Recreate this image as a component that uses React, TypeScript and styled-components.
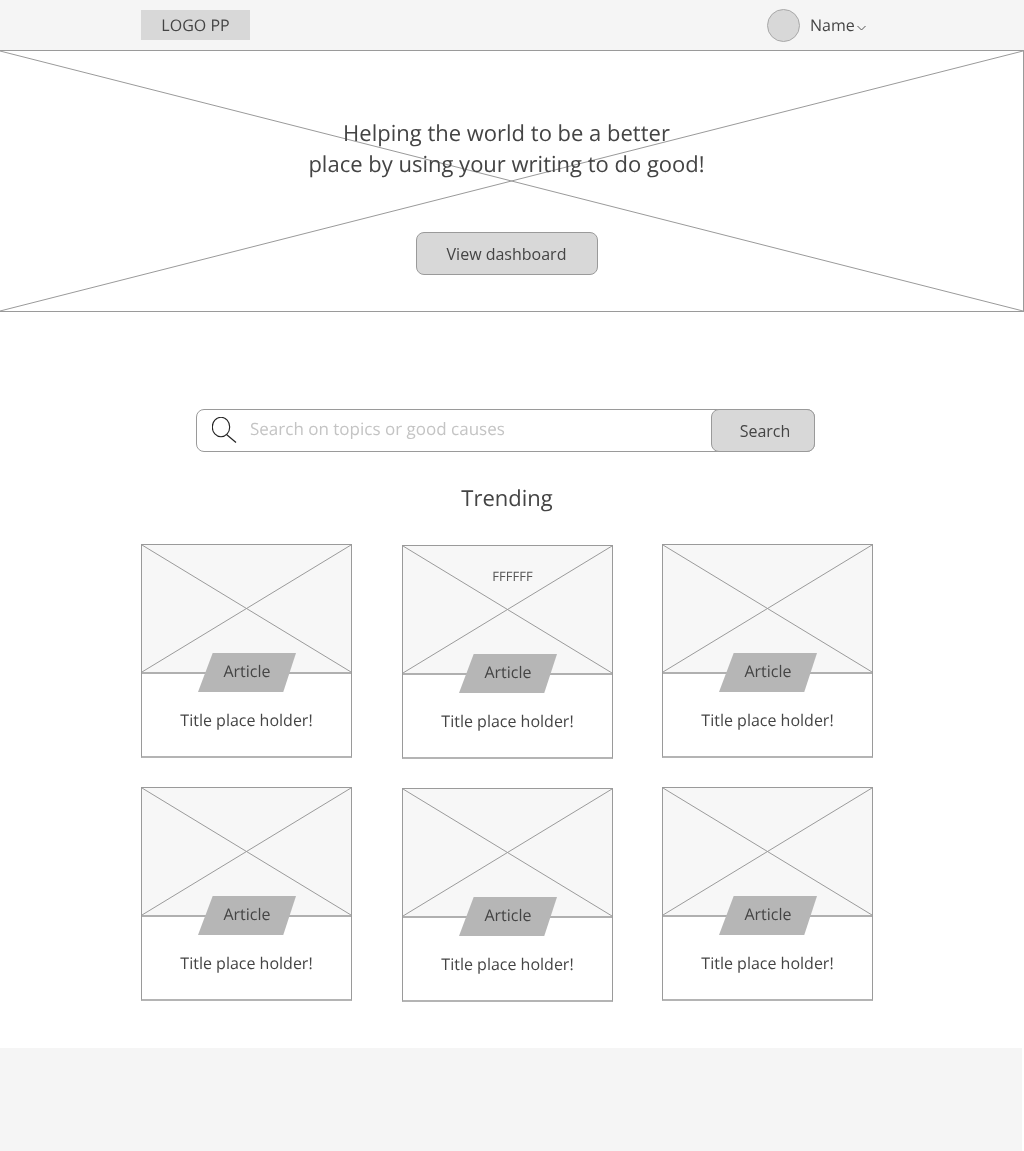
import { createGlobalStyle } from "styled-components";
import styled from "styled-components";

const GlobalStyle = createGlobalStyle`
  html, body {
    margin: 0;
    padding: 0;
    background: #fff;
  }
  body {
    font-family: "Open Sans", "Liberation Sans", sans-serif;
    color: #444;
    text-rendering: geometricPrecision;
  }
  * { box-sizing: border-box; }
`;

const Page = styled.div`
  width: 1024px;
  height: 1151px;
  overflow: hidden;
  will-change: transform;
`;

const HeaderBar = styled.header`
  display: flex;
  align-items: center;
  height: 50px;
  padding-left: 141px;
  background: #f5f5f5;
`;

const Logo = styled.div`
  display: flex;
  align-items: center;
  justify-content: center;
  width: 109px;
  height: 30px;
  background: #d8d8d8;
  font-size: 16px;
  color: #444;
`;

const UserMenu = styled.div`
  display: flex;
  align-items: center;
  margin-left: 517px;
`;

const Avatar = styled.div`
  width: 33px;
  height: 33px;
  border-radius: 50%;
  background: #d8d8d8;
  border: 1px solid #a8a8a8;
`;

const UserName = styled.span`
  margin-left: 10px;
  font-size: 16px;
  color: #444;
`;

const Chevron = styled.svg`
  margin: 6px 0 0 2px;
`;

const Hero = styled.section`
  position: relative;
  display: flex;
  flex-direction: column;
  align-items: center;
  height: 262px;
  padding: 67px 10px 0 0;
  background: #fff;
  border: 1px solid #9a9a9a;
  border-left: none;
`;

const CrossLines = styled.svg`
  position: absolute;
  top: 0;
  left: 0;
  width: 100%;
  height: 100%;
`;

const HeroTitle = styled.h1`
  position: relative;
  margin: 0;
  font-size: 22px;
  font-weight: 400;
  line-height: 31px;
  text-align: center;
  color: #444;
`;

const PrimaryButton = styled.button`
  position: relative;
  width: 182px;
  height: 43px;
  margin-top: 52px;
  background: #d8d8d8;
  border: 1px solid #9a9a9a;
  border-radius: 8px;
  font-family: inherit;
  font-size: 16px;
  color: #444;
`;

const SearchBar = styled.form`
  display: flex;
  align-items: stretch;
  width: 619px;
  height: 43px;
  margin: 97px 0 0 196px;
  background: #fff;
  border: 1px solid #9a9a9a;
  border-radius: 8px;
`;

const SearchIcon = styled.svg`
  flex: none;
  margin: 7px 0 0 15px;
`;

const SearchInput = styled.div`
  flex: 1;
  padding: 8px 0 0 12px;
  font-size: 17px;
  line-height: 22px;
  color: #c4c4c4;
`;

const SearchButton = styled.button`
  flex: none;
  width: 104px;
  height: 43px;
  margin: -1px -1px 0 0;
  padding: 0 0 0 4px;
  background: #d8d8d8;
  border: 1px solid #9a9a9a;
  border-radius: 8px;
  font-family: inherit;
  font-size: 16px;
  color: #444;
`;

const SectionTitle = styled.h2`
  margin: 31px 10px 0 0;
  font-size: 22px;
  font-weight: 400;
  line-height: 30px;
  text-align: center;
  color: #444;
`;

const CardGrid = styled.div`
  display: grid;
  grid-template-columns: 261px 260px 211px;
  grid-auto-rows: 243px;
  margin: 31px 0 0 141px;
`;

const Card = styled.article<{ $shifted: boolean }>`
  position: relative;
  display: flex;
  flex-direction: column;
  width: 211px;
  height: 214px;
  margin-top: ${(p) => (p.$shifted ? "1px" : "0")};
  border: 1px solid #9a9a9a;
  border-bottom: 2px solid #b4b4b4;
  background: #fff;
`;

const CardImage = styled.div`
  position: relative;
  flex: none;
  height: 129px;
  background: #f7f7f7;
  border-bottom: 2px solid #b0b0b0;
`;

const ImageNote = styled.span`
  position: absolute;
  top: 22px;
  left: 10px;
  right: 0;
  font-size: 13px;
  line-height: 16px;
  text-align: center;
  color: #555;
`;

const Badge = styled.div`
  position: absolute;
  top: 108px;
  left: 56px;
  display: flex;
  align-items: center;
  justify-content: center;
  width: 98px;
  height: 39px;
  padding-bottom: 3px;
  background: #b6b6b6;
  clip-path: polygon(15% 0, 100% 0, 87% 100%, 0 100%);
  font-size: 16px;
  color: #444;
`;

const CardTitle = styled.div`
  padding-top: 35px;
  font-size: 16px;
  line-height: 22px;
  text-align: center;
  color: #444;
`;

const Footer = styled.footer`
  width: 1022px;
  height: 103px;
  margin-top: 18px;
  background: #f5f5f5;
`;

const Line = styled.line`
  stroke: #9a9a9a;
  stroke-width: 1;
  vector-effect: non-scaling-stroke;
`;

const Cross = () => (
  <CrossLines viewBox="0 0 100 100" preserveAspectRatio="none">
    <Line x1="0" y1="0" x2="100" y2="100" />
    <Line x1="100" y1="0" x2="0" y2="100" />
  </CrossLines>
);

const cards = [
  { id: 1, shifted: false },
  { id: 2, shifted: true, note: "FFFFFF" },
  { id: 3, shifted: false },
  { id: 4, shifted: false },
  { id: 5, shifted: true },
  { id: 6, shifted: false },
];

export default function App() {
  return (
    <Page>
      <GlobalStyle />
      <HeaderBar>
        <Logo>LOGO PP</Logo>
        <UserMenu>
          <Avatar />
          <UserName>Name</UserName>
          <Chevron width="9" height="6" viewBox="0 0 9 6" fill="none" stroke="#555" strokeWidth="1">
            <path d="M0.5 1l4 4 4-4" />
          </Chevron>
        </UserMenu>
      </HeaderBar>

      <Hero>
        <Cross />
        <HeroTitle>
          Helping the world to be a better
          <br />
          place by using your writing to do good!
        </HeroTitle>
        <PrimaryButton type="button">View dashboard</PrimaryButton>
      </Hero>

      <SearchBar>
        <SearchIcon width="26" height="28" viewBox="0 0 26 28" fill="none" stroke="#222" strokeWidth="1.1">
          <ellipse cx="9" cy="10" rx="8.7" ry="9.7" />
          <path d="M14.5 17.5l9.5 8" />
        </SearchIcon>
        <SearchInput>Search on topics or good causes</SearchInput>
        <SearchButton type="button">Search</SearchButton>
      </SearchBar>

      <SectionTitle>Trending</SectionTitle>

      <CardGrid>
        {cards.map((card) => (
          <Card key={card.id} $shifted={card.shifted}>
            <CardImage>
              <Cross />
              {card.note && <ImageNote>{card.note}</ImageNote>}
            </CardImage>
            <Badge>Article</Badge>
            <CardTitle>Title place holder!</CardTitle>
          </Card>
        ))}
      </CardGrid>

      <Footer />
    </Page>
  );
}
